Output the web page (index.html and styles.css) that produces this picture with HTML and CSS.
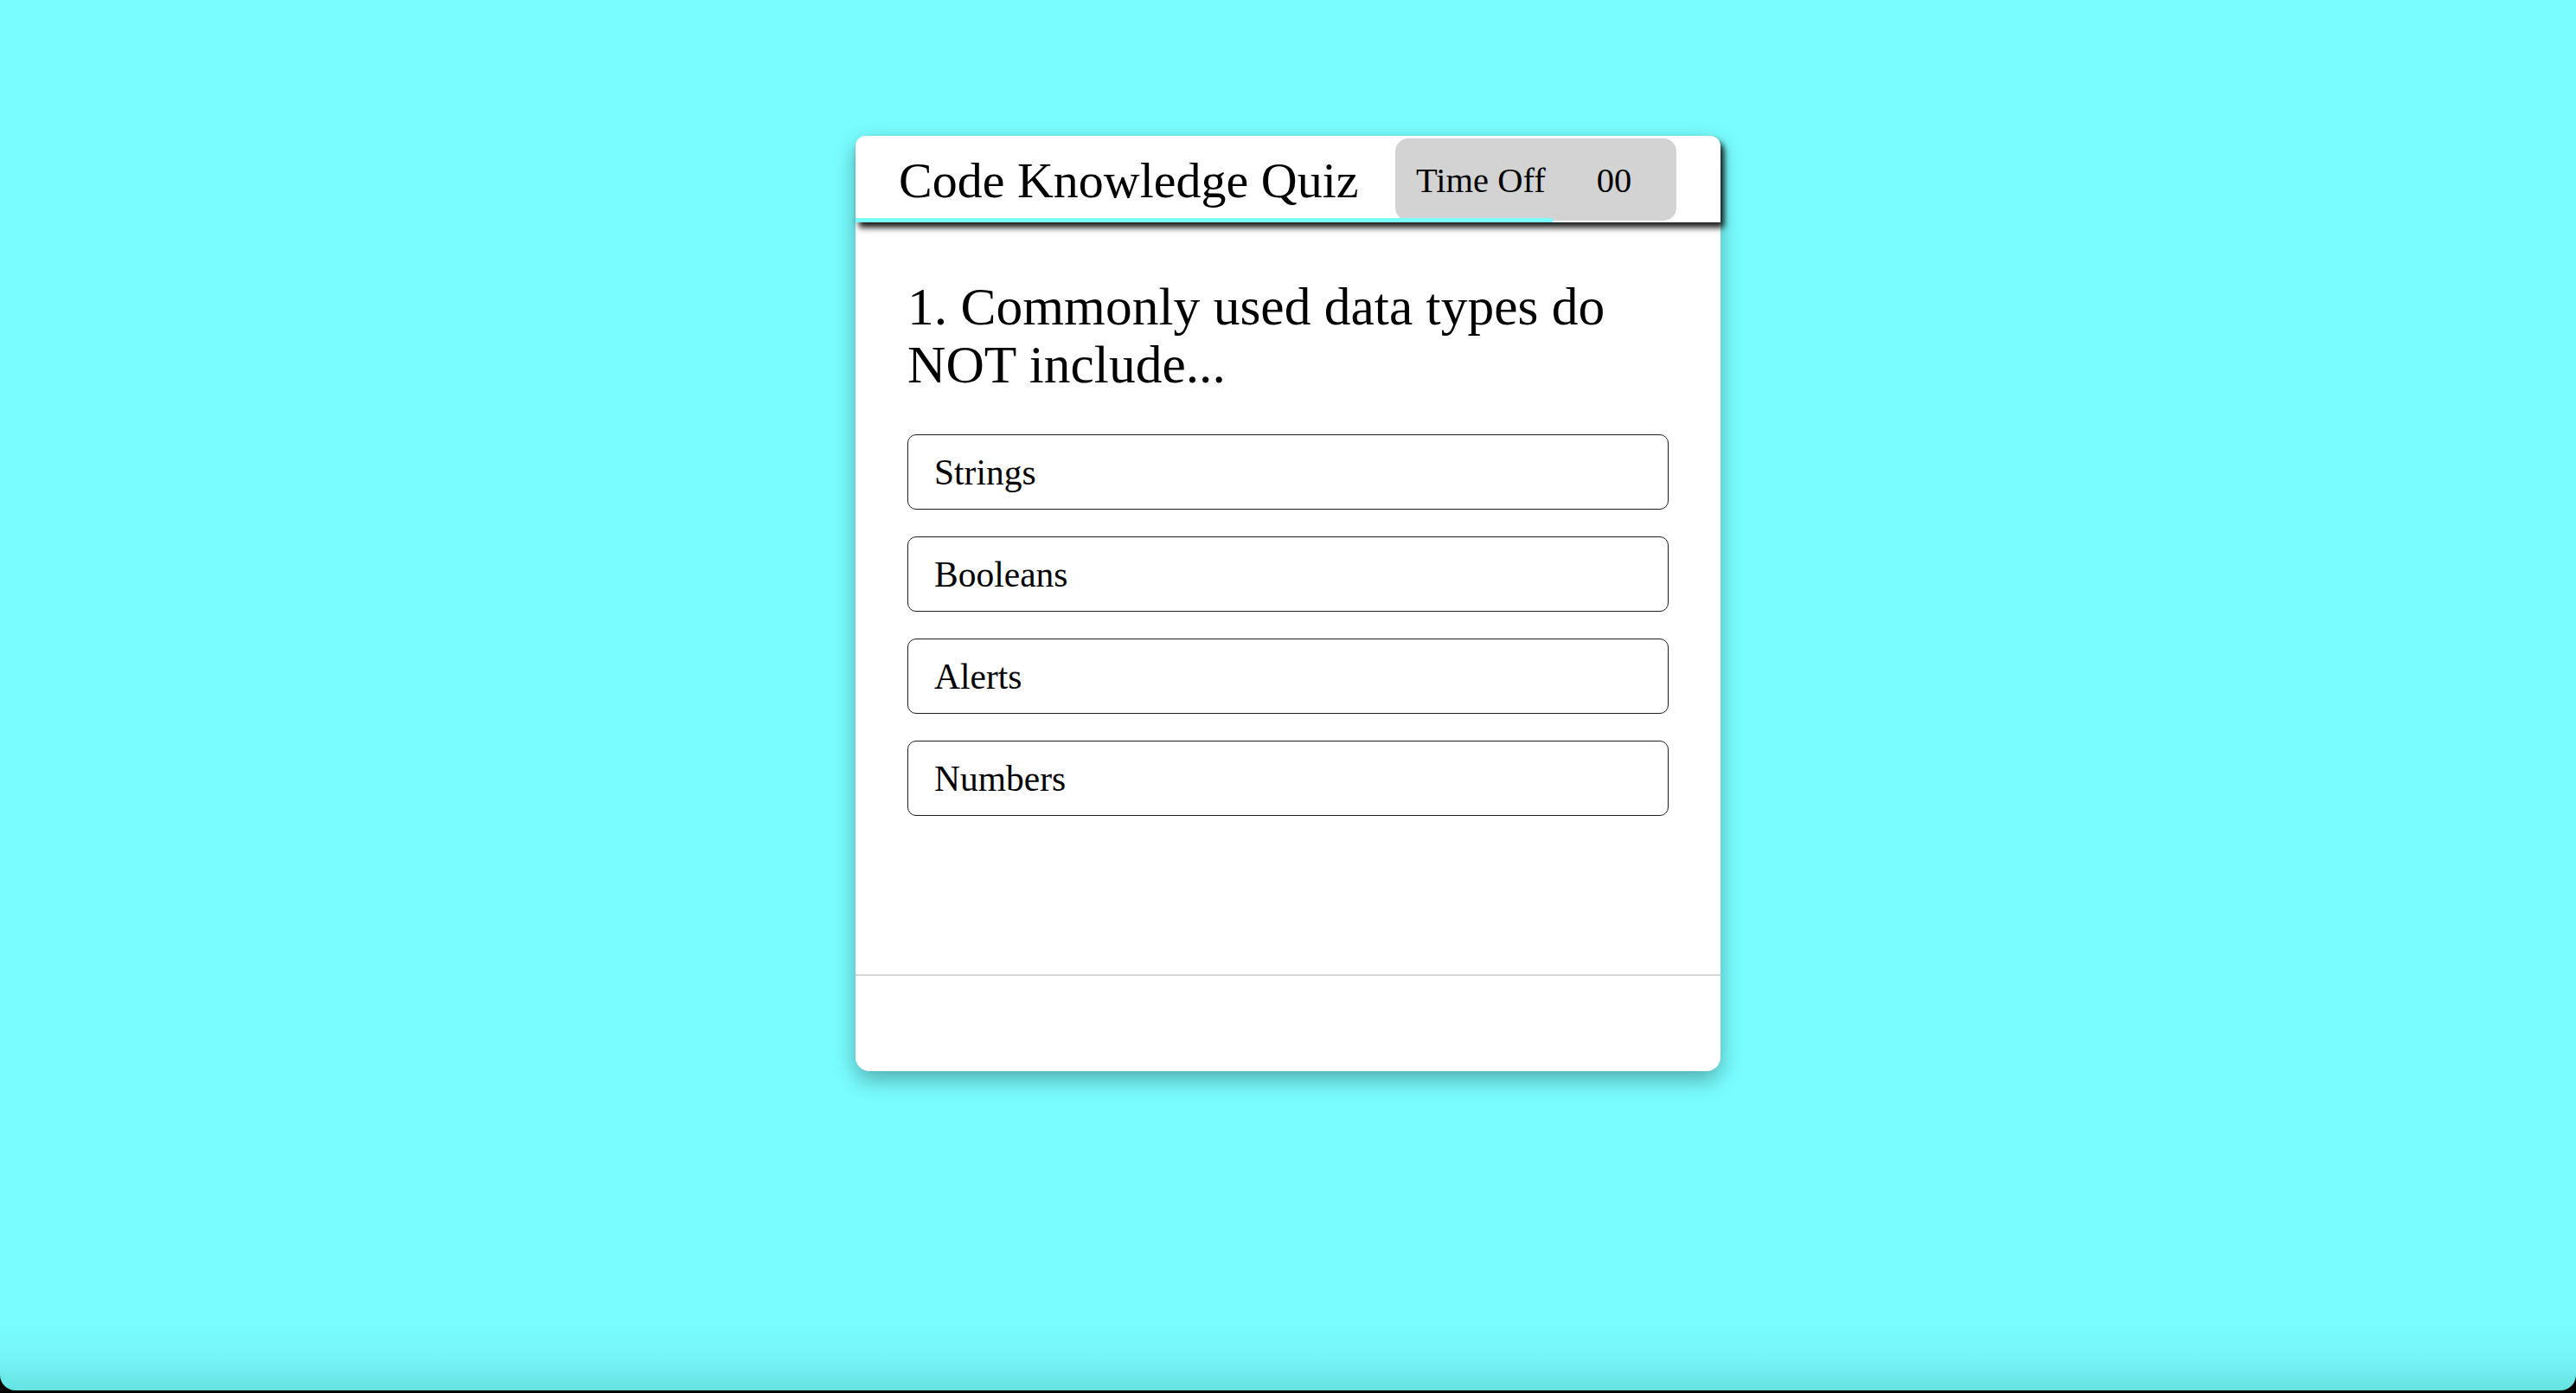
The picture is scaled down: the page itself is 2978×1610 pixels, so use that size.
FILE: index.html
```html
<!DOCTYPE html>
<html lang="en">
<head>
<meta charset="utf-8">
<title>Code Knowledge Quiz</title>
<link rel="stylesheet" href="styles.css">
</head>
<body>
<div class="page">
  <div class="card">
    <header class="card-header">
      <h1 class="title">Code Knowledge Quiz</h1>
      <div class="timer">
        <span class="timer-label">Time Off</span>
        <span class="timer-value">00</span>
      </div>
      <div class="progress" style="width: 806px"></div>
    </header>
    <main class="card-body">
      <h2 class="question">1. Commonly used data types do NOT include...</h2>
      <div class="answers">
        <button class="answer">Strings</button>
        <button class="answer">Booleans</button>
        <button class="answer">Alerts</button>
        <button class="answer">Numbers</button>
      </div>
    </main>
    <footer class="card-footer"></footer>
  </div>
</div>
</body>
</html>
```

FILE: styles.css
```css
html {
  margin: 0;
  padding: 0;
  background: #000;
}

body {
  margin: 0;
  padding: 0;
  font-family: "Liberation Serif", "Times New Roman", serif;
  color: #000;
}

.page {
  height: 1607px;
  box-sizing: border-box;
  padding-top: 157px;
  background: linear-gradient(to bottom, #79fdff 0, #79fdff 1530px, #76f4f6 1570px, #66e1e1 1607px);
  border-radius: 0 0 18px 18px;
  overflow: hidden;
}

.card {
  width: 1000px;
  margin: 0 auto;
  background: #fff;
  border-radius: 12px 12px 16px 16px;
  box-shadow: 0 10px 26px rgba(0, 0, 0, 0.32);
  display: flex;
  flex-direction: column;
}

.card-header {
  position: relative;
  height: 100px;
  box-sizing: border-box;
  padding-left: 50px;
  display: flex;
  align-items: center;
  background: #fff;
  border-radius: 12px 12px 0 0;
  box-shadow: 4px 6px 7px rgba(0, 0, 0, 0.9);
  z-index: 1;
}

.title {
  margin: 2px 0 0;
  font-size: 58px;
  font-weight: normal;
  line-height: normal;
  white-space: nowrap;
}

.timer {
  align-self: flex-start;
  margin: 3px 51px 0 auto;
  width: 325px;
  height: 95px;
  box-sizing: border-box;
  padding-left: 24px;
  padding-top: 2px;
  display: flex;
  align-items: center;
  gap: 59px;
  background: #d3d3d3;
  border-radius: 15px;
  font-size: 40.5px;
}

.progress {
  position: absolute;
  left: 0;
  bottom: 0;
  height: 5px;
  background: #79fdff;
}

.card-body {
  height: 869px;
  box-sizing: border-box;
  padding: 64px 60px 0;
}

.question {
  margin: 0 0 47px;
  font-size: 61.5px;
  font-weight: normal;
  line-height: 67px;
}

.answers {
  display: flex;
  flex-direction: column;
  gap: 31px;
}

.answer {
  display: block;
  width: 100%;
  height: 87px;
  box-sizing: border-box;
  padding: 0 0 0 30px;
  margin: 0;
  text-align: left;
  font-family: "Liberation Serif", "Times New Roman", serif;
  font-size: 41.5px;
  color: #000;
  background: #fff;
  border: 1.5px solid #1e1e1e;
  border-radius: 10px;
}

.card-footer {
  height: 110px;
  border-top: 2px solid #d6d6d6;
}
```
